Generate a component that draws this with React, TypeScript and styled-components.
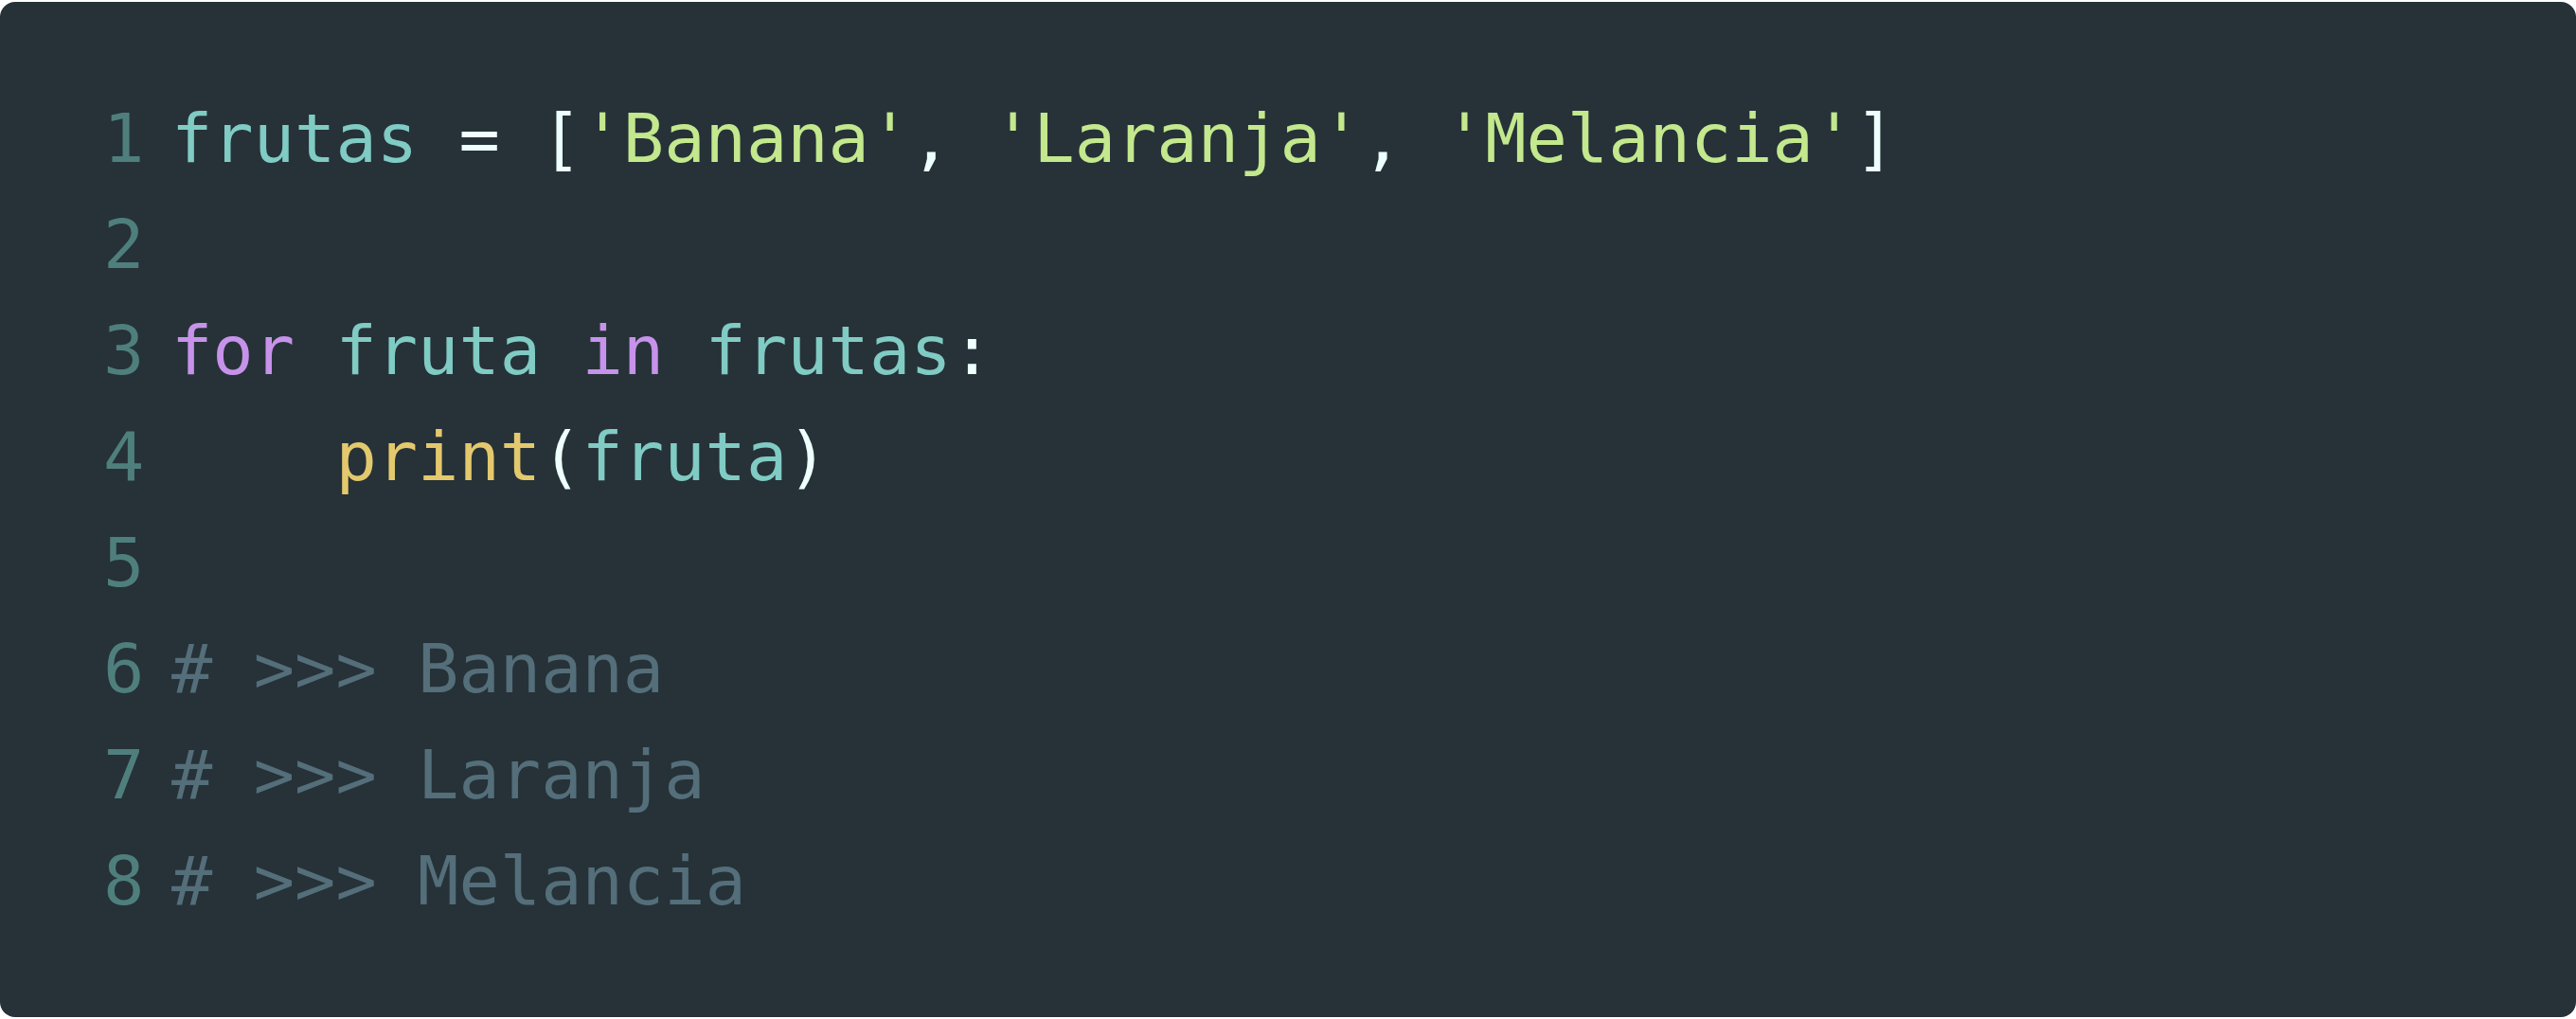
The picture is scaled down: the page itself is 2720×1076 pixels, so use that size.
import React from "react";
import styled, { createGlobalStyle } from "styled-components";

const Global = createGlobalStyle`
  html, body {
    margin: 0;
    padding: 0;
    background: #ffffff;
  }
`;

const Page = styled.div`
  padding-top: 2px;
  width: 2720px;
`;

const Card = styled.div`
  box-sizing: border-box;
  width: 2720px;
  height: 1072px;
  background: #263238;
  border-radius: 16px;
  padding: 88px 0 88px 109px;
  font-family: "DejaVu Sans Mono", "Liberation Mono", monospace;
  font-size: 72px;
  line-height: 112px;
`;

const Line = styled.div`
  display: flex;
  height: 112px;
  white-space: pre;
`;

const Num = styled.span`
  width: 43px;
  margin-right: 29px;
  color: #4f7f7d;
  text-align: center;
`;

const Code = styled.span`
  color: #eeffff;
`;

type Kind = "var" | "str" | "kw" | "fn" | "punc" | "cmt";

const colors: Record<Kind, string> = {
  var: "#80cbc4",
  str: "#c3e88d",
  kw: "#c792ea",
  fn: "#e3c86d",
  punc: "#eeffff",
  cmt: "#546e7a",
};

const Tok = styled.span<{ $k: Kind }>`
  color: ${(p) => colors[p.$k]};
`;

type T = [Kind, string];

const lines: T[][] = [
  [
    ["var", "frutas"],
    ["punc", " = ["],
    ["str", "'Banana'"],
    ["punc", ", "],
    ["str", "'Laranja'"],
    ["punc", ", "],
    ["str", "'Melancia'"],
    ["punc", "]"],
  ],
  [],
  [
    ["kw", "for"],
    ["punc", " "],
    ["var", "fruta"],
    ["punc", " "],
    ["kw", "in"],
    ["punc", " "],
    ["var", "frutas"],
    ["punc", ":"],
  ],
  [
    ["punc", "    "],
    ["fn", "print"],
    ["punc", "("],
    ["var", "fruta"],
    ["punc", ")"],
  ],
  [],
  [["cmt", "# >>> Banana"]],
  [["cmt", "# >>> Laranja"]],
  [["cmt", "# >>> Melancia"]],
];

export default function App() {
  return (
    <Page>
      <Global />
      <Card>
        {lines.map((toks, i) => (
          <Line key={i}>
            <Num>{i + 1}</Num>
            <Code>
              {toks.map(([k, t], j) => (
                <Tok key={j} $k={k}>
                  {t}
                </Tok>
              ))}
            </Code>
          </Line>
        ))}
      </Card>
    </Page>
  );
}
